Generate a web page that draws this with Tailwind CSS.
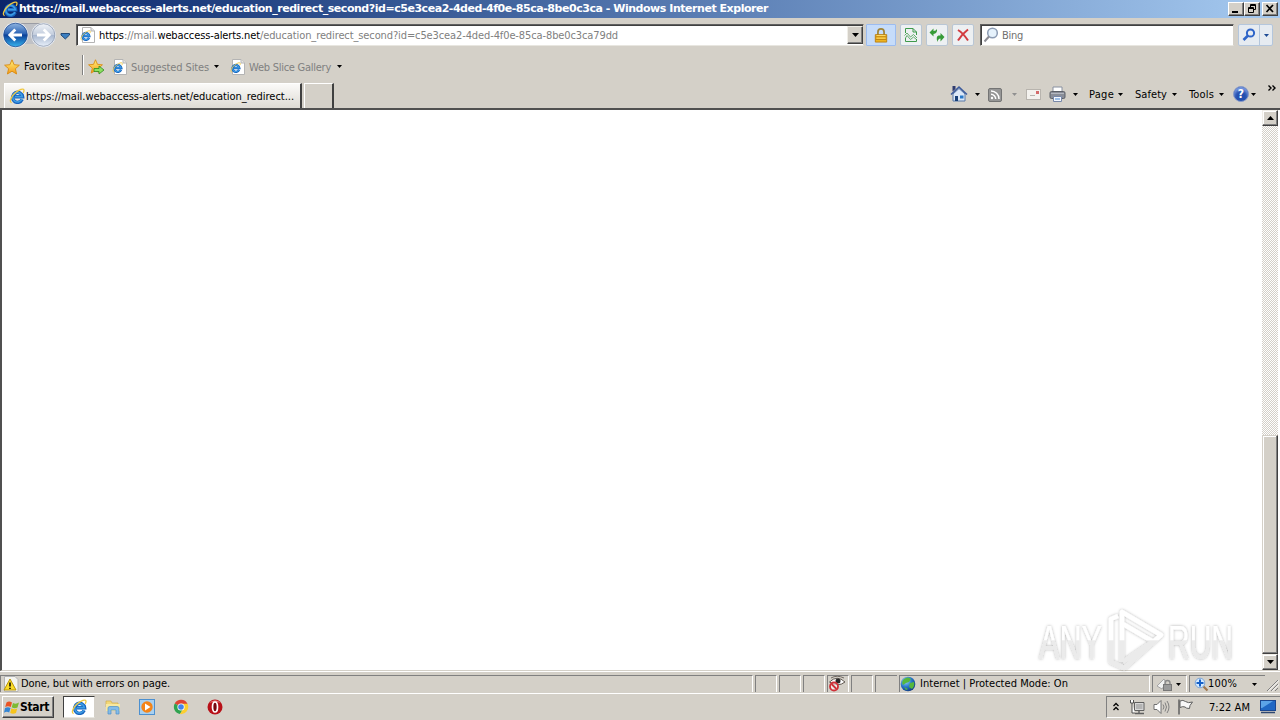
<!DOCTYPE html>
<html lang="en">
<head>
<meta charset="utf-8">
<title>Windows Internet Explorer</title>
<script src="https://cdn.jsdelivr.net/npm/@tailwindcss/browser@4"></script>
</head>
<body class="w-[1280px] h-[720px] overflow-hidden bg-[#d4d0c8] font-['DejaVu_Sans_Condensed','DejaVu_Sans',sans-serif] text-[11px] leading-[14px] text-black whitespace-nowrap">
<svg width="0" height="0" class="absolute">
  <defs>
    <linearGradient id="gb" x1="0" y1="0" x2="0" y2="1"><stop offset="0" stop-color="#8fb4e0"/><stop offset=".45" stop-color="#2a62b4"/><stop offset=".5" stop-color="#0a3f98"/><stop offset="1" stop-color="#37b4ee"/></linearGradient>
    <linearGradient id="gf" x1="0" y1="0" x2="0" y2="1"><stop offset="0" stop-color="#f0f3f8"/><stop offset=".48" stop-color="#c3cddd"/><stop offset=".52" stop-color="#a9b8d0"/><stop offset="1" stop-color="#e8f0fa"/></linearGradient>
    <linearGradient id="gs" x1="0" y1="0" x2="0" y2="1"><stop offset="0" stop-color="#fff27a"/><stop offset="1" stop-color="#f59a18"/></linearGradient>
    <radialGradient id="gg" cx=".35" cy=".3" r=".8"><stop offset="0" stop-color="#9fd8ff"/><stop offset=".5" stop-color="#2878c8"/><stop offset="1" stop-color="#0a2f78"/></radialGradient>
    <symbol id="ie" viewBox="0 0 16 16">
      <path d="M13.200 11.400A5 5 0 1 1 13.600 8.800H5.500" fill="none" stroke="#1763bd" stroke-width="3.400"/>
      <path d="M13 11A4.800 4.800 0 1 1 13.300 8.600H6" fill="none" stroke="#3c9ce4" stroke-width="1.600"/>
      <path d="M2.600 14.600C-.6 13.600 3 7.600 6.600 4.600C10 1.800 14.600-.4 15 2.200C15.100 3 14.700 4 14.200 4.800" fill="none" stroke="#f0c840" stroke-width="1.300"/>
    </symbol>
    <symbol id="iepage" viewBox="0 0 16 16">
      <path d="M3.500.5H12L15.500 4V15.500H3.500Z" fill="#fff" stroke="#b4b4b4"/><path d="M12 .5V4H15.500" fill="#e4e4e4" stroke="#b4b4b4"/>
      <use href="#ie" x="1" y="3" width="11" height="11"/>
    </symbol>
    <symbol id="star" viewBox="0 0 16 16"><path d="M8 .8L10.100 5.700L15.400 6.200L11.400 9.700L12.600 15L8 12.200L3.400 15L4.600 9.700L.6 6.200L5.900 5.700Z" fill="url(#gs)" stroke="#d98a10" stroke-width=".9"/></symbol>
    <symbol id="dn" viewBox="0 0 5 3"><path d="M0 0H5L2.500 3Z" fill="currentColor"/></symbol>
  </defs>
</svg>

<header class="h-[18px] flex items-center bg-linear-to-r from-[#0a246a] to-[#a6caf0] pl-[2px] pr-[2px]">
  <svg class="w-4 h-4 mr-px"><use href="#ie"/></svg>
  <span class="font-['DejaVu_Sans',sans-serif] text-white font-bold" data-w="749">https://mail.webaccess-alerts.net/education_redirect_second?id=c5e3cea2-4ded-4f0e-85ca-8be0c3ca - Windows Internet Explorer</span>
  <div class="ml-auto flex">
    <div class="w-4 h-[14px] bg-[#d4d0c8] border border-t-white border-l-white border-r-[#404040] border-b-[#404040] shadow-[inset_-1px_-1px_#808080]"><svg width="14" height="12"><path d="M3 8H9V10H3Z"/></svg></div>
    <div class="w-4 h-[14px] bg-[#d4d0c8] border border-t-white border-l-white border-r-[#404040] border-b-[#404040] shadow-[inset_-1px_-1px_#808080] mr-[2px]"><svg width="14" height="12" fill="none" stroke="#000"><path d="M5.500 5V1.500H10.500V6.500H9M5 2.500H11M3.500 4.500H8.500V9.500H3.500ZM3 5.500H9"/></svg></div>
    <div class="w-4 h-[14px] bg-[#d4d0c8] border border-t-white border-l-white border-r-[#404040] border-b-[#404040] shadow-[inset_-1px_-1px_#808080]"><svg width="14" height="12"><path d="M3.500 2L10 9M10 2L3.500 9" stroke="#000" stroke-width="1.700"/></svg></div>
  </div>
</header>

<nav class="h-[34px] flex items-center pl-[2px]">
  <svg width="70" height="30" viewBox="0 0 70 30">
    <path d="M13 3H42A12 12 0 0 1 42 27Q36 28 33 24H22Q18 28 13 27Z" fill="#bfc1c6"/>
    <path d="M13 3.500H42" stroke="#9a9ca4"/>
    <circle cx="13.500" cy="15" r="12.800" fill="#eef2f8"/><circle cx="13.500" cy="15" r="11.800" fill="url(#gb)" stroke="#1f4a90" stroke-width=".8"/>
    <path d="M20 15H8M13.300 9.500L7.800 15L13.300 20.500" fill="none" stroke="#fff" stroke-width="2.800"/>
    <circle cx="41.500" cy="15" r="12.300" fill="#eef2f8"/><circle cx="41.500" cy="15" r="11.300" fill="url(#gf)" stroke="#8d98ac" stroke-width=".8"/>
    <path d="M35 15H47M41.700 9.500L47.200 15L41.700 20.500" fill="none" stroke="#fff" stroke-width="2.800"/>
    <path d="M59 13.500H67.500V15L63.300 19L59 15Z" fill="#3c7fc0" stroke="#173f70" stroke-width=".9"/>
  </svg>
  <div class="ml-[4px] w-[788px] h-[22px] bg-white border border-t-[#606060] border-l-[#606060] border-r-[#d4d0c8] border-b-[#e8e6e0] shadow-[inset_1px_1px_#404040] flex items-center pl-[2px]">
    <svg class="w-4 h-4"><use href="#iepage"/></svg>
    <span class="ml-[4px] pt-[2px] text-[#808080]" data-w="519"><span class="text-black">https</span>://mail.<span class="text-black">webaccess-alerts.net</span>/education_redirect_second?id=c5e3cea2-4ded-4f0e-85ca-8be0c3ca79dd</span>
    <div class="ml-auto w-4 h-[18px] bg-[#d4d0c8] border border-t-[#f0eee8] border-l-[#f0eee8] border-r-[#404040] border-b-[#404040] shadow-[inset_-1px_-1px_#808080] flex items-center justify-center"><svg width="7" height="4"><path d="M0 0H7L3.500 4Z"/></svg></div>
  </div>
  <div class="ml-[2px] w-[30px] h-[22px] border border-[#9cbcf0] rounded-[1px] bg-[#c6dcfa] flex items-center justify-center">
    <svg width="14" height="17" viewBox="0 0 16 18"><path d="M4.500 9V5A3.500 3.500 0 0 1 11.500 5V9" fill="none" stroke="#a0853a" stroke-width="2"/><path d="M1.500 8H14.500V16.500H1.500Z" fill="#eeb420" stroke="#b87c10"/><path d="M2 10.500H14M2 13.500H14" stroke="#b87c10"/><path d="M3 9H13M3 12H13" stroke="#ffdf70"/></svg>
  </div>
  <div class="ml-[4px] w-[22px] h-[22px] border border-[#b9c6d4] rounded-[2px] bg-[#edf0f2] flex items-center justify-center"><svg width="16" height="16" fill="none" stroke="#3f9a4c"><path d="M2.500 6V1.500H10L13.500 5V8M10 1.500V5H13.500M2.500 11V14.500H13.500V12" /><path d="M1.500 8.500L4 6L7.500 10L10.500 7.500L14 11M2.500 11L4 8.500L7.500 12.500L10.500 10L13.500 12.500" stroke-width=".8"/></svg></div>
  <div class="ml-[4px] w-[22px] h-[22px] border border-[#b9c6d4] rounded-[2px] bg-[#edf0f2] flex items-center justify-center"><svg width="16" height="16" fill="#379b37"><path d="M.5 5.500L4.500 1.500V4Q7 4 8 2Q8.500 6.500 4.500 7V9.500ZM15.500 10L11.500 14.500V11.500Q9 11.500 8.500 15Q6.500 9.500 9.500 8.500H11.500V6Z"/></svg></div>
  <div class="ml-[4px] w-[22px] h-[22px] border border-[#b9c6d4] rounded-[2px] bg-[#edf0f2] flex items-center justify-center"><svg width="14" height="14"><path d="M2 2Q7 5 12 12.500M12 1.500Q6 6 2 12.500" fill="none" stroke="#d23c40" stroke-width="2"/></svg></div>
  <div class="ml-[6px] w-[254px] h-[22px] bg-white border border-t-[#606060] border-l-[#606060] border-r-[#d4d0c8] border-b-[#e8e6e0] shadow-[inset_1px_1px_#404040] flex items-center pl-[2px]">
    <svg width="16" height="16" fill="none"><circle cx="9.500" cy="6" r="4.800" stroke="#8c9cb4" stroke-width="1.500" fill="#e6f2fc"/><path d="M6 9.500L1.500 14.500" stroke="#8c8c94" stroke-width="2"/></svg>
    <span class="ml-[3px] pt-[2px] text-[#707070]" data-w="21">Bing</span>
  </div>
  <div class="ml-[4px] w-[35px] h-[22px] border border-[#b4c6dc] rounded-[2px] bg-[#e6ebf1] flex items-center">
    <svg width="20" height="16" fill="none"><circle cx="11.500" cy="6" r="3.600" stroke="#2e64c8" stroke-width="2"/><path d="M8.800 8.800L4.500 13" stroke="#2e64c8" stroke-width="2.600"/></svg>
    <div class="w-px h-5 bg-[#b4c6dc]"></div><svg class="w-[5px] h-[3px] ml-[4px] text-[#1d4a94]"><use href="#dn"/></svg>
  </div>
</nav>

<div class="h-[28px] flex items-center pl-[4px] pt-px">
  <svg class="w-4 h-4"><use href="#star"/></svg>
  <span class="ml-[4px]" data-w="46">Favorites</span>
  <div class="ml-[12px] mb-1 w-[2px] h-5 border-l border-[#808080] bg-white"></div>
  <svg class="ml-[4px]" width="17" height="16"><use href="#star" width="15" height="15"/><path d="M6 9.500H11V7L16 11L11 15V12.500H6Z" fill="#8ce060" stroke="#2f8a1e" stroke-width=".8"/></svg>
  <svg class="w-4 h-4 ml-[6px]"><use href="#iepage"/></svg>
  <span class="ml-[4px] pt-[2px] text-[#808080]" data-w="78">Suggested Sites</span>
  <svg class="w-[5px] h-[3px] ml-[5px]"><use href="#dn"/></svg>
  <svg class="w-4 h-4 ml-[10px]"><use href="#iepage"/></svg>
  <span class="ml-[4px] pt-[2px] text-[#808080]" data-w="82">Web Slice Gallery</span>
  <svg class="w-[5px] h-[3px] ml-[6px]"><use href="#dn"/></svg>
</div>

<div class="h-[28px] flex items-end pl-[4px]">
  <div class="w-[298px] h-[25px] bg-linear-to-b from-[#fbfaf8] to-[#dedbd4] border-l border-t border-white border-r-2 border-r-[#404040] flex items-center pl-[4px]">
    <svg class="w-4 h-4"><use href="#ie"/></svg>
    <span class="ml-[1px] pt-px" data-w="268">https://mail.webaccess-alerts.net/education_redirect...</span>
  </div>
  <div class="ml-[2px] w-[30px] h-[25px] border-l border-t border-white border-r-2 border-r-[#404040]"></div>
  <div class="ml-[616px] h-[28px] flex items-center">
    <svg width="18" height="18"><path d="M3 9V16H15V9L9 3.500Z" fill="#dce8f8" stroke="#5878a8"/><path d="M1 9.500L9 2L17 9.500" fill="none" stroke="#3c5a9c" stroke-width="1.500"/><path d="M2.500 1H5.500V4L2.500 6.500Z" fill="#303c70"/><path d="M5 11H8V16H5Z" fill="#173f78"/><path d="M10 10.500H13.500V13.500H10Z" fill="#2878c8"/></svg>
    <svg class="w-[5px] h-[3px] ml-[7px]"><use href="#dn"/></svg>
    <svg class="ml-[8px] mt-px" width="14" height="14" fill="none"><rect x=".5" y=".5" width="13" height="13" rx="1.500" fill="#969696" stroke="#747474"/><path d="M3 3A8 8 0 0 1 11 11M3 6.300A4.700 4.700 0 0 1 7.700 11" stroke="#fff" stroke-width="1.500"/><circle cx="4" cy="10" r="1.200" fill="#fff"/></svg>
    <svg class="w-[5px] h-[3px] ml-[10px] text-[#909090]"><use href="#dn"/></svg>
    <svg class="ml-[9px]" width="15" height="11"><rect x=".5" y=".5" width="14" height="10" fill="#f4f2ee" stroke="#b8b4ae"/><path d="M10 2H13V5H10Z" fill="#d46a6a"/><path d="M4 6.500H9" stroke="#b8b4ae"/></svg>
    <svg class="ml-[8px]" width="17" height="16"><path d="M4 6V1H13V6" fill="#fff" stroke="#8890a0"/><rect x="1" y="5.500" width="15" height="7" rx="1.500" fill="#8a8e98" stroke="#5c6068"/><path d="M2 7.500H15" stroke="#b4b8c0"/><path d="M4.500 10.500H12.500V15.500H4.500Z" fill="#f4f8ff" stroke="#7888a8"/><path d="M6 13H11" stroke="#4888d0"/></svg>
    <svg class="w-[5px] h-[3px] ml-[7px]"><use href="#dn"/></svg>
    <span class="ml-[11px] pt-[2px]" data-w="25">Page</span><svg class="w-[5px] h-[3px] ml-[4px]"><use href="#dn"/></svg>
    <span class="ml-[12px] pt-[2px]" data-w="32">Safety</span><svg class="w-[5px] h-[3px] ml-[5px]"><use href="#dn"/></svg>
    <span class="ml-[12px] pt-[2px]" data-w="25">Tools</span><svg class="w-[5px] h-[3px] ml-[5px]"><use href="#dn"/></svg>
    <div class="ml-[9px] w-4 h-4 rounded-full bg-[#2450b0] border border-[#8a9cc8] shadow-[inset_0_3px_3px_#7898e0] text-white font-bold text-[12px] leading-[14px] text-center">?</div>
    <svg class="w-[5px] h-[3px] ml-[2px]"><use href="#dn"/></svg>
    <svg class="ml-[12px] mb-[13px]" width="8" height="6" fill="none" stroke="#000" stroke-width="1.400"><path d="M.5.500L3 3L.5 5.500M4.500.500L7 3L4.500 5.500"/></svg>
  </div>
</div>

<main class="h-[563px] flex bg-white border-t-2 border-t-[#505050] border-l-2 border-l-[#505050] border-b border-b-[#d4d0c8]">
  <div class="w-[1260px]"></div>
  <div class="w-4 flex flex-col justify-between bg-[repeating-conic-gradient(#d4d0c8_0_25%,#fff_0_50%)] bg-[length:2px_2px]">
    <div class="h-4 bg-[#d4d0c8] border border-t-[#f0eee8] border-l-[#f0eee8] border-r-[#404040] border-b-[#404040] shadow-[inset_-1px_-1px_#808080,inset_1px_1px_#fff] flex items-center justify-center"><svg width="7" height="4"><path d="M0 4H7L3.500 0Z"/></svg></div>
    <div>
      <div class="h-[219px] bg-[#d4d0c8] border border-t-[#d4d0c8] border-l-[#d4d0c8] border-r-[#404040] border-b-[#404040] shadow-[inset_-1px_-1px_#808080,inset_1px_1px_#fff]"></div>
      <div class="h-4 bg-[#d4d0c8] border border-t-[#f0eee8] border-l-[#f0eee8] border-r-[#404040] border-b-[#404040] shadow-[inset_-1px_-1px_#808080,inset_1px_1px_#fff] flex items-center justify-center"><svg width="7" height="4"><path d="M0 0H7L3.500 4Z"/></svg></div>
    </div>
  </div>
</main>

<svg class="absolute left-[1030px] top-[604px] overflow-visible" width="230" height="72" viewBox="0 0 230 72" font-family="'Liberation Sans',sans-serif" font-size="49">
  <defs>
    <linearGradient id="wm" gradientUnits="userSpaceOnUse" x1="0" y1="0" x2="0" y2="72"><stop offset=".5" stop-color="#fff"/><stop offset=".51" stop-color="#ebebeb"/></linearGradient>
    <filter id="sh" x="-10%" y="-10%" width="120%" height="120%"><feDropShadow dx="0" dy="0" stdDeviation="1.800" flood-color="#000" flood-opacity=".32"/></filter>
  </defs>
  <g filter="url(#sh)" fill="url(#wm)" stroke="url(#wm)">
    <text x="9" y="55" textLength="63" lengthAdjust="spacingAndGlyphs" stroke="none">ANY</text>
    <text x="138" y="55" textLength="65" lengthAdjust="spacingAndGlyphs" stroke="none">RUN</text>
    <path d="M92 58V8L131 31L94 64L81 58V15L88 12M93 20L122 37M93 58L128 34" fill="none" stroke-width="4.500" stroke-linejoin="round"/>
  </g>
</svg>

<footer class="h-[22px] flex items-stretch pt-[3px] pb-px border-t border-white">
  <div class="w-[753px] flex items-center pl-[2px] border-t border-l border-[#808080] border-r border-r-white"><svg width="16" height="16"><path d="M1.500.500H12L15 3.500V15.500H1.500Z" fill="#f4f4f0" stroke="#b4b4b4"/><path d="M7 3L13 14H1Z" fill="#fbdc28" stroke="#b89408"/><path d="M7 6.500V10.500M7 11.700V13" stroke="#000" stroke-width="1.500"/></svg><span class="ml-[2px]" data-w="149">Done, but with errors on page.</span></div>
  <div class="ml-[2px] w-[22px] border-t border-l border-[#808080] border-r border-r-white"></div>
  <div class="ml-[2px] w-[22px] border-t border-l border-[#808080] border-r border-r-white"></div>
  <div class="ml-[2px] w-[22px] border-t border-l border-[#808080] border-r border-r-white"></div>
  <div class="ml-[2px] w-[22px] border-t border-l border-[#808080] border-r border-r-white"><svg class="overflow-visible" width="18" height="16" fill="none"><path d="M1.500 6Q9-1.500 17 6Q10 11.500 1.500 6Z" fill="#fff" stroke="#605850"/><circle cx="10" cy="5" r="2.500" fill="#282828"/><path d="M3 2Q9-1.500 16 2" stroke="#706860"/><circle cx="6" cy="10.500" r="4" fill="#fff" fill-opacity=".6" stroke="#cf3038" stroke-width="1.800"/><path d="M3.500 8L8.500 13" stroke="#cf3038" stroke-width="1.800"/></svg></div>
  <div class="ml-[2px] w-[22px] border-t border-l border-[#808080] border-r border-r-white"></div>
  <div class="ml-[2px] w-[22px] border-t border-l border-[#808080]"></div>
  <div class="ml-[2px] w-[251px] flex items-center border-t border-l border-[#808080] border-r border-r-white"><svg width="16" height="16"><circle cx="8" cy="8" r="7.300" fill="url(#gg)"/><path d="M4 3Q8 0 11 3L9 6L6 7L3 9Q1 6 4 3ZM10 7L14 6Q15 10 12 13L9 11ZM4 11L8 13L6 14Z" fill="#56b83c"/></svg><span class="ml-[4px]" data-w="148">Internet | Protected Mode: On</span></div>
  <div class="ml-[2px] w-[35px] flex items-center border-t border-l border-[#808080] border-r border-r-white"><svg class="ml-[3px]" width="17" height="15"><path d="M1 9L8 2L10 6L6 12Z" fill="#f2f2f2" stroke="#a4a4a4"/><path d="M9 8V6A2.500 2.500 0 0 1 14 6V8" fill="none" stroke="#888" stroke-width="1.400"/><rect x="7.500" y="7.500" width="8" height="6" fill="#9a9a9a" stroke="#787878"/></svg><svg class="w-[5px] h-[3px] ml-[3px]"><use href="#dn"/></svg></div>
  <div class="ml-[2px] w-[76px] flex items-center border-t border-l border-[#808080]"><svg class="ml-[4px]" width="15" height="15"><path d="M9 9L13.500 13.500" stroke="#a07850" stroke-width="2.200"/><circle cx="6" cy="6" r="4.800" fill="#d4eaff" stroke="#7ca4d4"/><path d="M6 2.500V9.500M2.500 6H9.500" stroke="#1660c8" stroke-width="2"/></svg><span class="-ml-px" data-w="29">100%</span><svg class="w-[5px] h-[3px] ml-[15px]"><use href="#dn"/></svg></div>
  <svg class="ml-[1px]" width="13" height="18" stroke="#808080"><path d="M1 16L12 5M5 16L12 9M9 16L12 13"/><path d="M2.200 16.200L13 5.500M6.200 16.200L13 9.500" stroke="#fff"/></svg>
</footer>

<footer class="h-[27px] flex items-center border-t border-white pl-[2px]">
  <div class="w-[52px] h-[22px] flex items-center border border-t-white border-l-white border-r-[#404040] border-b-[#404040] shadow-[inset_-1px_-1px_#808080] pl-px">
    <svg width="16" height="15"><path d="M2.500 2.500Q5 .5 8 2.500L6.800 7Q4 5.500 1.200 7Z" fill="#ea5424"/><path d="M9 3Q12 4.500 15 2.500L13.500 7.500Q10.500 9 7.700 7.300Z" fill="#7eba34"/><path d="M1 8Q4 6.500 6.500 8L5.200 12.500Q2.500 11 0 12.800Z" fill="#3486d4"/><path d="M7.400 8.300Q10.500 10 13.200 8.500L12 13Q9 14.500 6.200 13Z" fill="#f6c41c"/></svg>
    <span class="font-bold text-[12px]" data-w="29">Start</span>
  </div>
  <div class="ml-[9px] w-[32px] h-[22px] flex items-center justify-center bg-white border border-t-[#404040] border-l-[#404040] border-r-[#d4d0c8] border-b-[#e8e6e0]"><svg class="w-4 h-4"><use href="#ie"/></svg></div>
  <svg class="ml-[10px]" width="16" height="16"><path d="M1 2H6L7 4H13V8H1Z" fill="#f2d878" stroke="#d0ac4c" stroke-width=".7"/><path d="M1 5H15V12H1Z" fill="#f8e8a0"/><path d="M3 15V9Q3 7.500 5 7.500H12Q14 7.500 14 9V15H11V11H6V15Z" fill="#84bce8" stroke="#4a90c8" stroke-width=".7"/></svg>
  <svg class="ml-[18px]" width="16" height="16"><rect x=".5" y=".5" width="15" height="15" fill="#a8d0f0" stroke="#4c90d0"/><circle cx="8" cy="8" r="5.700" fill="#f48418"/><path d="M6 4.500L11.500 8L6 11.500Z" fill="#fff"/></svg>
  <svg class="ml-[18px]" width="16" height="16"><path d="M8 8L1.720 4.500A7.200 7.200 0 0 1 14.500 4.900H8Z" fill="#e04434"/><path d="M8 8H15.200L14.500 4.800H8Z" fill="#fccf30"/><path d="M8 8L1.800 4.400A7.200 7.200 0 0 0 7 15.100L10.500 9.500Z" fill="#30a350"/><path d="M14.500 4.900A7.200 7.200 0 0 1 7 15.100L11 8.500L9.500 4.900Z" fill="#fccf30"/><circle cx="8" cy="8" r="3.600" fill="#fff"/><circle cx="8" cy="8" r="2.800" fill="#4484ec"/></svg>
  <svg class="ml-[18px]" width="16" height="16"><circle cx="8" cy="8" r="7.500" fill="#b81018"/><path d="M2 4Q8-1.500 14 4Q8 2 2 4Z" fill="#e87070"/><ellipse cx="8" cy="8" rx="2.500" ry="5" fill="#780810" stroke="#fff" stroke-width="1.700"/></svg>
  <div class="ml-auto w-[174px] h-[22px] flex items-center border-t border-l border-[#808080] border-b border-b-white pl-[6px]">
    <svg width="6" height="10" fill="none" stroke="#000" stroke-width="1.300"><path d="M.5 4L3 1.500L5.500 4M.5 8L3 5.500L5.500 8"/></svg>
    <svg class="ml-[10px]" width="16" height="16"><path d="M5.500 3.500H15V11.500H5.500Z" fill="#d8d8d8" stroke="#606060"/><path d="M7 5H13.500V10H7Z" fill="#b4b4b4"/><path d="M6 14.500H15M10 12V14" stroke="#606060" stroke-width="1.400"/><path d="M1.500 1V4H4.500V1M3 4V14H6" fill="#fff" stroke="#505050"/></svg>
    <svg class="ml-[8px]" width="17" height="16" fill="none"><path d="M1 5.500H4L8 1.500V14.500L4 10.500H1Z" fill="#fff" stroke="#707070"/><path d="M10 5.500Q12 8 10 10.500M12 3.500Q15 8 12 12.500M14 2Q18 8 14 14" stroke="#808080"/></svg>
    <svg class="ml-[7px]" width="17" height="16"><path d="M2 .5V15.500" stroke="#606060" stroke-width="1.500"/><path d="M3 2Q6 .5 8.500 2.500Q11 4.500 15.500 3L13 6.500L12.500 9.500Q9 9.500 8 8Q6 7 3 8.500Z" fill="#f8f8f8" stroke="#606060"/></svg>
    <span class="ml-[15px] pt-[2px]" data-w="41">7:22 AM</span>
    <svg class="ml-[10px]" width="16" height="14"><rect x=".5" y=".5" width="15" height="10" fill="#2068c4" stroke="#1c4890"/><path d="M1 1H13L2 8H1Z" fill="#5ca4e8"/><path d="M1 12.500H15" stroke="#304870" stroke-width="1.500"/></svg>
  </div>
</footer>

<script>
// Letter-spacing brings each label to its designed width, again whenever its size changes.
function fit(el) {
  const gap = Number(el.dataset.w) - el.getBoundingClientRect().width;
  if (Math.abs(gap) < 0.5) return;
  const now = parseFloat(el.style.letterSpacing) || 0;
  el.style.letterSpacing = now + gap / el.textContent.length + 'px';
}
const labels = document.querySelectorAll('[data-w]');
const watcher = new ResizeObserver(entries => entries.forEach(e => fit(e.target)));
labels.forEach(el => watcher.observe(el));
addEventListener('load', () => labels.forEach(fit));
</script>
</body>
</html>
